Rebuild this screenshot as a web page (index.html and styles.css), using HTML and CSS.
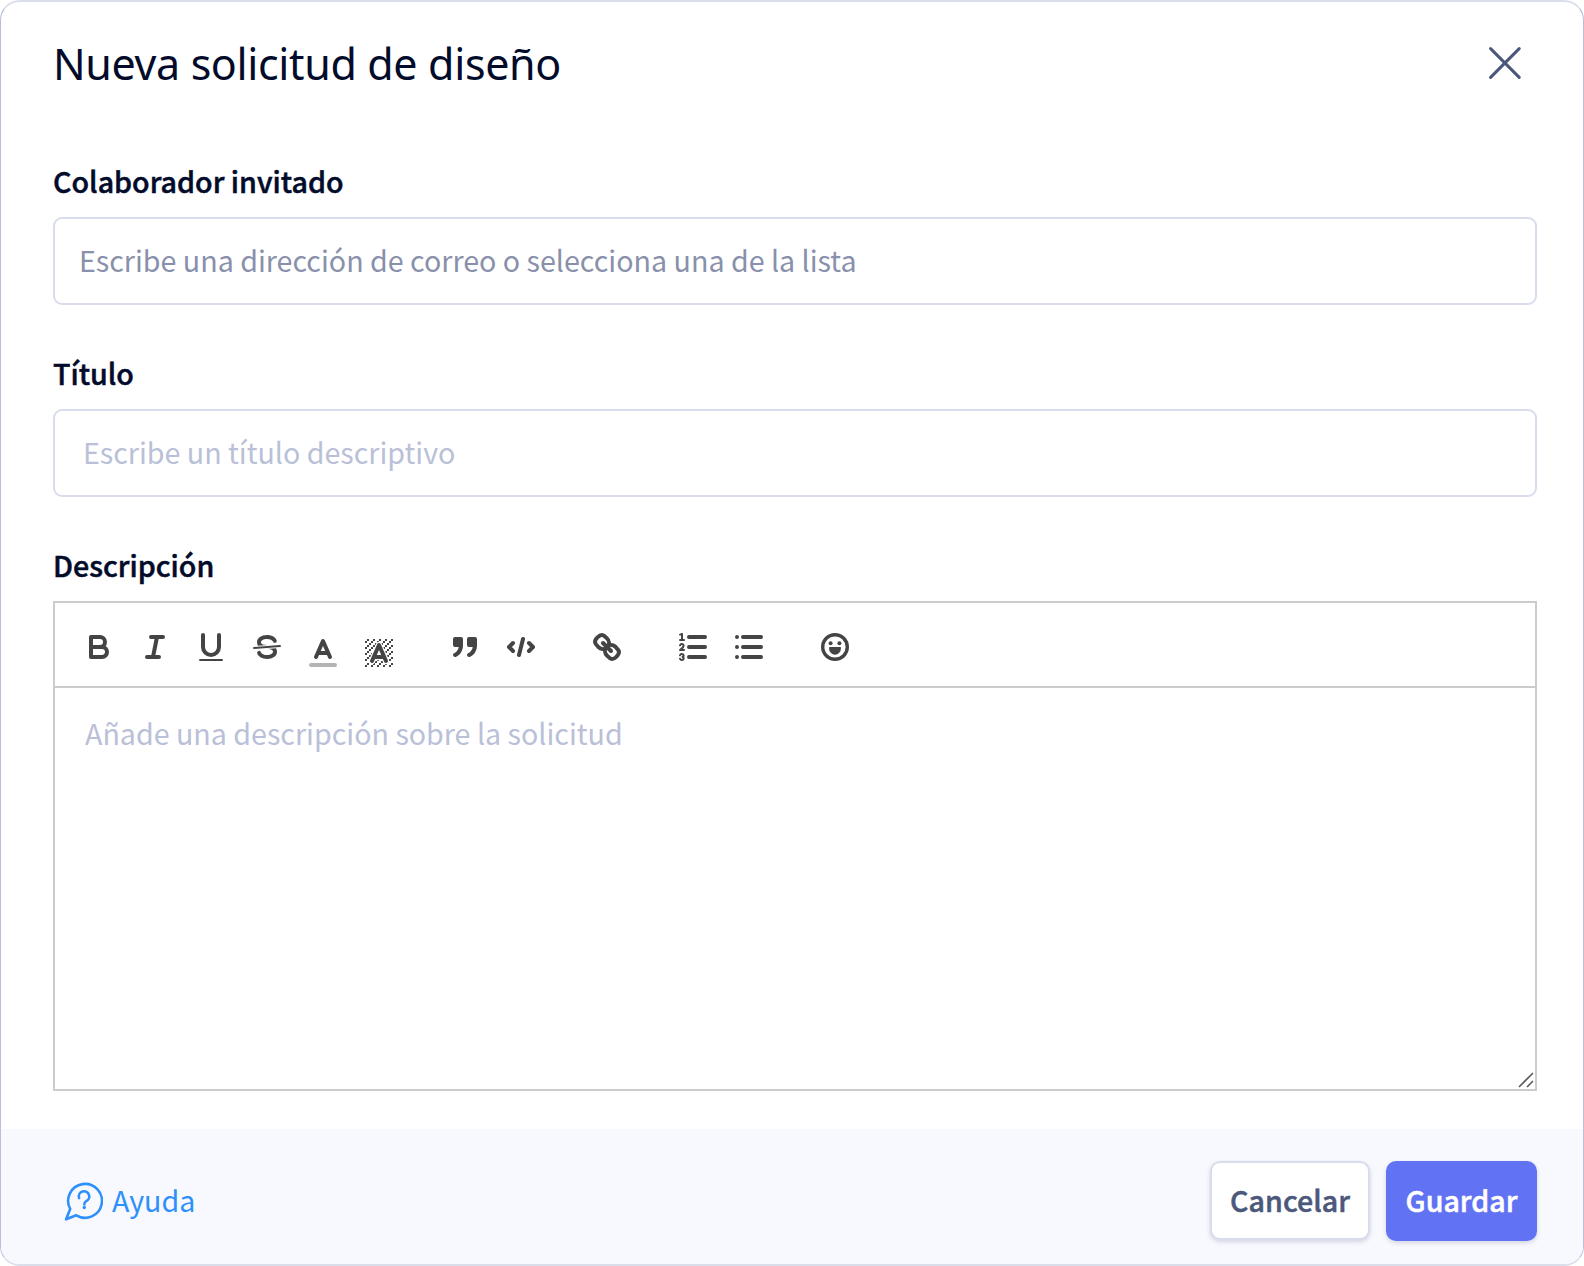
FILE: index.html
```html
<!DOCTYPE html>
<html lang="es">
<head>
<meta charset="utf-8">
<title>Nueva solicitud de diseño</title>
<link rel="stylesheet" href="styles.css">
</head>
<body>
<form class="modal">
  <header class="modal-header">
    <h1 class="modal-title">Nueva solicitud de diseño</h1>
    <button type="button" class="close" aria-label="Cerrar">
      <svg width="32" height="32" viewBox="0 0 32 32"><path d="M1.6 1.6 30.2 30.4M30.2 1.6 1.6 30.4"/></svg>
    </button>
  </header>

  <main class="modal-body">
    <div class="field">
      <label class="label" for="guest">Colaborador invitado</label>
      <input class="input input-guest" id="guest" placeholder="Escribe una dirección de correo o selecciona una de la lista">
    </div>
    <div class="field">
      <label class="label" for="title">Título</label>
      <input class="input input-title" id="title" placeholder="Escribe un título descriptivo">
    </div>
    <div class="field field-editor">
      <span class="label">Descripción</span>
      <div class="editor">
        <div class="toolbar">
          <div class="tools">
            <button type="button" class="tool" aria-label="Negrita"><svg viewBox="0 0 18 18"><path d="M5,4H9.5A2.5,2.5,0,0,1,12,6.5v0A2.5,2.5,0,0,1,9.5,9H5V4Z"/><path d="M5,9h5.5A2.5,2.5,0,0,1,13,11.5v0A2.5,2.5,0,0,1,10.5,14H5V9Z"/></svg></button>
            <button type="button" class="tool" aria-label="Cursiva"><svg viewBox="0 0 18 18"><path d="M7,4H13M5,14H11M8,14L10,4"/></svg></button>
            <button type="button" class="tool" aria-label="Subrayado"><svg viewBox="0 0 18 18"><path d="M5,3V9a4.012,4.012,0,0,0,4,4H9a4.012,4.012,0,0,0,4-4V3"/><rect class="fill" x="3" y="15" width="12" height="1" rx=".5"/></svg></button>
            <button type="button" class="tool" aria-label="Tachado"><svg viewBox="0 0 18 18"><path class="thin" d="M15.5,8.5L2.5,9.5"/><path class="fill" d="M9.007,8C6.542,7.791,6,7.519,6,6.5,6,5.792,7.283,5,9,5c1.571,0,2.765.679,2.969,1.309a1,1,0,0,0,1.9-.617C13.356,4.106,11.354,3,9,3,6.2,3,4,4.538,4,6.5a3.2,3.2,0,0,0,.5,1.843Z"/><path class="fill" d="M8.984,10C11.457,10.208,12,10.479,12,11.5c0,.708-1.283,1.5-3,1.5-1.571,0-2.765-.679-2.969-1.309a1,1,0,1,0-1.9.617C4.644,13.894,6.646,15,9,15c2.8,0,5-1.538,5-3.5a3.2,3.2,0,0,0-.5-1.843Z"/></svg></button>
            <button type="button" class="tool tool-low" aria-label="Color"><svg viewBox="0 0 18 18"><path class="faded" d="M3,15H15"/><path d="M5.5,11L9,3L12.5,11M11.63,9H6.38"/></svg></button>
            <button type="button" class="tool tool-low" aria-label="Fondo"><svg viewBox="0 0 18 18"><defs><pattern id="hatch" x="2" y="2" width="3" height="3" patternUnits="userSpaceOnUse"><path class="fill" d="M1,0H2V1H1ZM0,1H1V2H0ZM2,2H3V3H2Z"/></pattern></defs><rect class="hatched" x="2" y="2" width="14" height="14"/><path class="halo" d="M5.5,13L9,5L12.5,13M11.63,11H6.38"/><path d="M5.5,13L9,5L12.5,13M11.63,11H6.38"/></svg></button>
          </div>
          <div class="tools">
            <button type="button" class="tool" aria-label="Cita"><svg viewBox="0 0 18 18"><g class="solid"><rect x="4" y="5" width="3" height="3"/><rect x="11" y="5" width="3" height="3"/><path d="M7,8c0,4.031-3,5-3,5"/><path d="M14,8c0,4.031-3,5-3,5"/></g></svg></button>
            <button type="button" class="tool" aria-label="Código"><svg viewBox="0 0 18 18"><path d="M5,7L3,9L5,11M13,7L15,9L13,11M10,5L8,13"/></svg></button>
          </div>
          <div class="tools">
            <button type="button" class="tool" aria-label="Enlace"><svg viewBox="0 0 18 18"><path d="M7,7L11,11"/><path d="M8.9,4.577a3.476,3.476,0,0,1,.36,4.679A3.476,3.476,0,0,1,4.577,8.9C3.185,7.5,2.035,6.4,4.217,4.217S7.5,3.185,8.9,4.577Z"/><path d="M13.423,9.1a3.476,3.476,0,0,0-4.679-.36,3.476,3.476,0,0,0,.36,4.679c1.392,1.392,2.5,2.542,4.679.36S14.815,10.5,13.423,9.1Z"/></svg></button>
          </div>
          <div class="tools">
            <button type="button" class="tool" aria-label="Lista numerada"><svg viewBox="0 0 18 18"><path d="M7,4H15M7,9H15M7,14H15"/><path class="thin" d="M2.5,5.5H4.5"/><path class="fill" d="M3.5,6A0.5,0.5,0,0,1,3,5.5V3.085l-0.276.138A0.5,0.5,0,0,1,2.053,3c-0.124-.247-0.023-0.324.224-0.447l1-.5A0.5,0.5,0,0,1,4,2.5v3A0.5,0.5,0,0,1,3.5,6Z"/><path class="thin" d="M4.5,10.5h-2c0-.234,1.85-1.076,1.85-2.234A0.959,0.959,0,0,0,2.5,8.156"/><path class="thin" d="M2.5,14.846a0.959,0.959,0,0,0,1.85-.109A0.7,0.7,0,0,0,3.75,14a0.688,0.688,0,0,0,.6-0.736,0.959,0.959,0,0,0-1.85-.109"/></svg></button>
            <button type="button" class="tool" aria-label="Lista"><svg viewBox="0 0 18 18"><path d="M6,4H15M6,9H15M6,14H15M3,4H3M3,9H3M3,14H3"/></svg></button>
          </div>
          <div class="tools">
            <button type="button" class="tool" aria-label="Emoji"><svg viewBox="0 0 18 18"><circle class="face" cx="9" cy="9" r="6.15"/><circle class="fill" cx="6.8" cy="7.1" r="1"/><circle class="fill" cx="11.2" cy="7.1" r="1"/><path class="fill" d="M6.4,9H11.6Q12,9 12,9.5A3,3.4 0 0 1 6,9.5Q6,9 6.4,9Z"/></svg></button>
          </div>
        </div>
        <div class="editor-area">
          <p class="editor-hint">Añade una descripción sobre la solicitud</p>
          <svg class="grip" width="16" height="16" viewBox="0 0 16 16"><path d="M1 15 15 1M9 15 15 9"/></svg>
        </div>
      </div>
    </div>
  </main>

  <footer class="modal-footer">
    <a class="help">
      <svg width="39" height="39" viewBox="0 0 39 39"><path d="M6.2 26.9A16.9 16.9 0 1 1 12.3 33.3L2.1 37.3Z"/><path d="M15.1 16.1A5.2 5.2 0 1 1 22 19.3Q20.3 20.2 20.3 22.5"/><circle cx="20.3" cy="25.5" r="1.7"/></svg>
      <span class="help-text">Ayuda</span>
    </a>
    <div class="actions">
      <button type="button" class="btn btn-cancel">Cancelar</button>
      <button type="button" class="btn btn-save">Guardar</button>
    </div>
  </footer>
</form>
</body>
</html>
```
FILE: styles.css
```css
* { box-sizing: border-box; }

body {
  margin: 0;
  background: #fff;
  color: #020b2a;
  font-family: "Noto Sans CJK SC", "Noto Sans", sans-serif;
  font-size: 28.63px;
}

button { padding: 0; border: 0; background: none; font: inherit; }

.modal {
  display: flex;
  flex-direction: column;
  width: 1584px;
  height: 1266px;
  overflow: hidden;
  border: solid #dadeeb;
  border-width: 2px 1px;
  border-left-color: #b8bfdb;
  border-right-color: #b8bfdb;
  border-radius: 20px;
}

.modal-header {
  display: flex;
  justify-content: space-between;
  align-items: center;
  height: 124px;
  padding: 0 62px 0 52px;
}

.modal-title {
  margin: 0;
  font: 400 43px/60px "Noto Sans", sans-serif;
  letter-spacing: -0.36px;
}

.close { display: flex; padding-bottom: 2px; }
.close svg { fill: none; stroke: #4b587c; stroke-width: 3; stroke-linecap: round; }

.modal-body {
  display: flex;
  flex-direction: column;
  flex: 1;
  padding: 36px 46px 38px 52px;
}

.field { display: flex; flex-direction: column; height: 192px; }
.field-editor { flex: 1; height: auto; }

.label {
  height: 55px;
  font-weight: 500;
  line-height: 38px;
  -webkit-text-stroke: 0.5px currentColor;
}

.input {
  width: 100%;
  height: 88px;
  padding: 0 24px 4px;
  border: 2px solid #d9dcec;
  border-radius: 9px;
  background: #fff;
  font: inherit;
}
.input-title { padding-left: 28px; }
.input::placeholder { color: #b9c0d8; opacity: 1; }
.input-guest::placeholder { color: #8890ab; }

.editor { display: flex; flex-direction: column; flex: 1; border: 2px solid #ccc; }

.toolbar {
  display: flex;
  gap: 30px;
  height: 85px;
  padding: 16px;
  border-bottom: 2px solid #ccc;
}
.tools { display: flex; }
.tool { width: 56px; height: 51px; padding: 9.5px 10px 5.5px; }
.tool-low { padding: 15.5px 10px 0; }
.tool svg {
  display: block;
  width: 36px;
  height: 36px;
  overflow: visible;
  fill: none;
  stroke: #444;
  stroke-width: 2;
  stroke-linecap: round;
  stroke-linejoin: round;
}
.tool .thin { stroke-width: 1; }
.tool .fill { fill: #444; stroke: none; }
.tool .hatched { fill: url(#hatch); stroke: none; }
.tool .solid { fill: #444; }
.tool .faded { opacity: .4; }
.tool .halo { stroke: #fff; stroke-width: 3.2; }
.tool .face { stroke-width: 1.7; }

.editor-area { position: relative; flex: 1; padding: 24px 30px; }
.editor-hint { margin: 0; color: #b9c0d8; line-height: 41px; }
.grip { position: absolute; right: 1px; bottom: 1px; fill: none; stroke: #5c5c5c; stroke-width: 1.6; }

.modal-footer {
  display: flex;
  justify-content: space-between;
  align-items: center;
  height: 135px;
  padding: 9px 46px 0 63px;
  background: #f8f9fe;
}

.help { display: flex; align-items: center; gap: 9px; color: #2e90fa; }
.help svg { fill: none; stroke: currentColor; stroke-width: 2.6; stroke-linejoin: round; stroke-linecap: round; }
.help circle { fill: currentColor; stroke: none; }
.help-text { padding-bottom: 4px; }

.actions { display: flex; gap: 16px; }
.btn {
  height: 80px;
  padding-bottom: 3px;
  border-radius: 10px;
  font-weight: 500;
  -webkit-text-stroke: 0.5px currentColor;
  box-shadow: 0 2px 4px rgba(60, 70, 120, .2);
}
.btn-cancel { width: 160px; height: 79px; border: 2px solid #d9dcec; background: #fff; color: #4b587c; }
.btn-save { width: 151px; background: #6172f3; color: #fff; }
```
